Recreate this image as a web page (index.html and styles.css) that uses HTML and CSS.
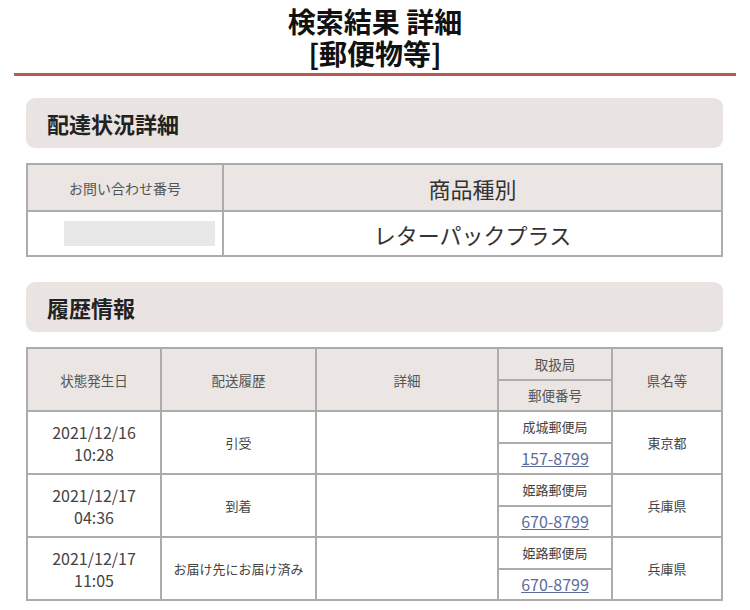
FILE: index.html
```html
<!DOCTYPE html>
<html lang="ja">
<head>
<meta charset="utf-8">
<link rel="stylesheet" href="styles.css">
</head>
<body>
<header class="page-head">
  <h1 class="title">検索結果 詳細<br>[郵便物等]</h1>
</header>
<main class="content">
  <h2 class="section">配達状況詳細</h2>
  <table class="tbl summary">
    <colgroup><col class="c-no"><col></colgroup>
    <tr class="head">
      <th class="small">お問い合わせ番号</th>
      <th class="large">商品種別</th>
    </tr>
    <tr class="body">
      <td><div class="masked"></div></td>
      <td class="large">レターパックプラス</td>
    </tr>
  </table>

  <h2 class="section">履歴情報</h2>
  <table class="tbl history">
    <colgroup>
      <col class="c1"><col class="c2"><col class="c3"><col class="c4"><col class="c5">
    </colgroup>
    <tr class="sub">
      <th rowspan="2">状態発生日</th>
      <th rowspan="2">配送履歴</th>
      <th rowspan="2">詳細</th>
      <th>取扱局</th>
      <th rowspan="2">県名等</th>
    </tr>
    <tr class="sub"><th>郵便番号</th></tr>

    <tr class="sub">
      <td rowspan="2" class="date">2021/12/16<br>10:28</td>
      <td rowspan="2">引受</td>
      <td rowspan="2"></td>
      <td>成城郵便局</td>
      <td rowspan="2">東京都</td>
    </tr>
    <tr class="sub"><td><a class="zip" href="#">157-8799</a></td></tr>

    <tr class="sub">
      <td rowspan="2" class="date">2021/12/17<br>04:36</td>
      <td rowspan="2">到着</td>
      <td rowspan="2"></td>
      <td>姫路郵便局</td>
      <td rowspan="2">兵庫県</td>
    </tr>
    <tr class="sub"><td><a class="zip" href="#">670-8799</a></td></tr>

    <tr class="sub">
      <td rowspan="2" class="date">2021/12/17<br>11:05</td>
      <td rowspan="2">お届け先にお届け済み</td>
      <td rowspan="2"></td>
      <td>姫路郵便局</td>
      <td rowspan="2">兵庫県</td>
    </tr>
    <tr class="sub"><td><a class="zip" href="#">670-8799</a></td></tr>
  </table>
</main>
</body>
</html>
```

FILE: styles.css
```css
html, body {
  margin: 0;
  padding: 0;
  background: #ffffff;
}
body {
  font-family: "Noto Sans CJK JP", "Noto Sans", sans-serif;
  color: #333;
}
.page-head {
  margin: 0 14px;
  padding-top: 5px;
  border-bottom: 3px solid #b85a55;
  padding-bottom: 4px;
}
.title {
  margin: 0;
  text-align: center;
  font-size: 28px;
  line-height: 32px;
  font-weight: 700;
  color: #111;
}
.content {
  margin: 0 27px 0 26px;
  padding-top: 22px;
}
.section {
  margin: 0;
  height: 50px;
  line-height: 50px;
  background: #e9e4e1;
  border-radius: 9px;
  padding-left: 21px;
  font-size: 22px;
  font-weight: 700;
  color: #222;
}
.tbl {
  width: 100%;
  border-collapse: collapse;
  table-layout: fixed;
  margin-top: 15px;
  margin-bottom: 25px;
}
.tbl th, .tbl td {
  border: 2px solid #acacac;
  text-align: center;
  vertical-align: middle;
  padding: 0;
  font-weight: 400;
  font-size: 13px;
  color: #444;
}
.tbl th {
  background: #ebe6e3;
}
.summary .c-no { width: 196px; }
.summary .head { height: 47px; }
.summary .body { height: 45px; }
.summary .small { font-size: 14px; color: #555; }
.summary .large { font-size: 22px; color: #333; }
.masked {
  width: 151px;
  height: 25px;
  margin-left: 36px;
  background: #e8e8e8;
}
.history .c1 { width: 134px; }
.history .c2 { width: 155px; }
.history .c3 { width: 182px; }
.history .c4 { width: 114px; }
.history .sub { height: 31.5px; }
.history th { font-size: 13.5px; color: #555; }
.history .date {
  font-size: 16px;
  line-height: 22px;
  color: #444;
}
.zip {
  font-size: 16px;
  color: #5a6d9e;
  text-decoration: underline;
}
```
